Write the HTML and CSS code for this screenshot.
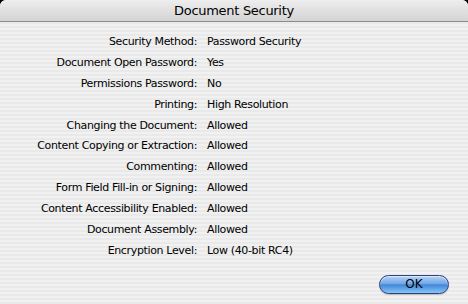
FILE: index.html
```html
<!DOCTYPE html>
<html>
<head>
<meta charset="utf-8">
<link rel="stylesheet" href="styles.css">
</head>
<body>
<div class="window">
  <div class="titlebar">Document Security</div>
  <div class="content">
    <div class="grid">
      <div class="label">Security Method:</div><div class="value">Password Security</div>
      <div class="label">Document Open Password:</div><div class="value">Yes</div>
      <div class="label">Permissions Password:</div><div class="value">No</div>
      <div class="label">Printing:</div><div class="value">High Resolution</div>
      <div class="label">Changing the Document:</div><div class="value">Allowed</div>
      <div class="label">Content Copying or Extraction:</div><div class="value">Allowed</div>
      <div class="label">Commenting:</div><div class="value">Allowed</div>
      <div class="label">Form Field Fill-in or Signing:</div><div class="value">Allowed</div>
      <div class="label">Content Accessibility Enabled:</div><div class="value">Allowed</div>
      <div class="label">Document Assembly:</div><div class="value">Allowed</div>
      <div class="label">Encryption Level:</div><div class="value">Low (40-bit RC4)</div>
    </div>
    <div class="actions">
      <button class="ok">OK</button>
    </div>
  </div>
</div>
</body>
</html>
```
FILE: styles.css
```css
html, body {
  margin: 0;
  padding: 0;
  background: #000;
}
body {
  width: 468px;
  height: 304px;
  overflow: hidden;
  font-family: "DejaVu Sans", sans-serif;
}
.window {
  width: 468px;
  height: 304px;
  display: flex;
  flex-direction: column;
  border-radius: 6px 6px 0 0;
  overflow: hidden;
  background: repeating-linear-gradient(to bottom, #f1f1f1 0px, #f1f1f1 2px, #e9e9e9 2px, #e9e9e9 4px);
}
.titlebar {
  height: 21px;
  line-height: 21px;
  text-align: center;
  font-size: 13px;
  color: #000;
  background: linear-gradient(to bottom, #eeeeee 0%, #e0e0e0 50%, #d4d4d4 100%);
  border-bottom: 1px solid #8c8c8c;
  letter-spacing: -0.3px;
}
.content {
  flex: 1;
  display: flex;
  flex-direction: column;
  padding-top: 9px;
}
.grid {
  display: grid;
  grid-template-columns: 197px auto;
  column-gap: 10px;
  grid-auto-rows: 20.9px;
  font-size: 11px;
  letter-spacing: -0.35px;
  color: #000;
  align-items: center;
}
.label {
  text-align: right;
  white-space: nowrap;
}
.value {
  white-space: nowrap;
}
.actions {
  display: flex;
  justify-content: flex-end;
  padding-right: 19px;
  margin-top: auto;
  padding-bottom: 10px;
}
.ok {
  width: 70px;
  height: 19px;
  border-radius: 10px;
  border: 1px solid #2f3f7a;
  background: linear-gradient(to bottom, #b4d2f6 0%, #73a8e8 45%, #4186da 52%, #86c6f6 100%);
  box-shadow: inset 0 1px 1px rgba(255,255,255,0.6), 0 1px 1px rgba(0,0,0,0.2);
  font-family: "DejaVu Sans", sans-serif;
  font-size: 12px;
  color: #000;
  padding: 0;
  line-height: 17px;
}
```
